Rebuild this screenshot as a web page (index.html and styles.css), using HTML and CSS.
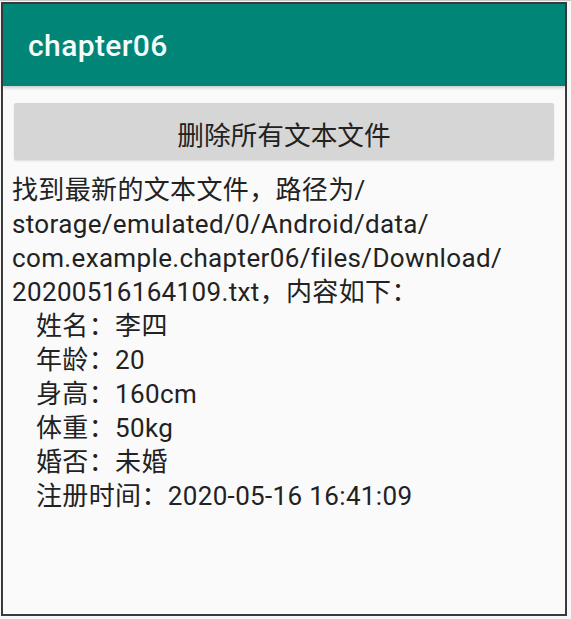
FILE: index.html
```html
<!DOCTYPE html>
<html lang="zh-CN">
<head>
<meta charset="utf-8">
<title>chapter06</title>
<link rel="stylesheet" href="styles.css">
</head>
<body>
<div class="frame">
  <div class="screen">
    <header class="appbar">
      <span class="title">chapter06</span>
    </header>
    <main class="content">
      <div class="btn">删除所有文本文件</div>
      <div class="result">
        <div class="line">找到最新的文本文件，路径为/</div>
        <div class="line">storage/emulated/0/Android/data/</div>
        <div class="line">com.example.chapter06/files/Download/</div>
        <div class="line">20200516164109.txt，内容如下：</div>
        <div class="line item">姓名：李四</div>
        <div class="line item">年龄：20</div>
        <div class="line item">身高：160cm</div>
        <div class="line item">体重：50kg</div>
        <div class="line item">婚否：未婚</div>
        <div class="line item">注册时间：2020-05-16 16:41:09</div>
      </div>
    </main>
  </div>
</div>
</body>
</html>
```

FILE: styles.css
```css
html, body {
  margin: 0;
  padding: 0;
}
body {
  background: #f7f7f7;
  border-top: 1px solid #c8c8c8;
  width: 571px;
  height: 618px;
  overflow: hidden;
  font-family: Roboto, "Noto Sans CJK SC", sans-serif;
}
.frame {
  margin: 1px 0 0 1px;
  width: 562px;
  height: 610px;
  border: 2px solid #3a3a3a;
  background: #fafafa;
}
.screen {
  display: flex;
  flex-direction: column;
  height: 100%;
}
.appbar {
  height: 82px;
  background: #008577;
  display: flex;
  align-items: center;
  padding-left: 25px;
  box-shadow: 0 2px 3px rgba(0, 0, 0, 0.18);
  position: relative;
}
.title {
  color: #f4fbf9;
  font-size: 30px;
  font-weight: 500;
  letter-spacing: 0.4px;
  line-height: 82px;
  padding-top: 1px;
}
.content {
  padding: 17px 11px 0;
}
.btn {
  height: 57px;
  background: #d6d6d6;
  border-radius: 2px;
  box-shadow: 0 1px 2px rgba(0, 0, 0, 0.12);
  display: flex;
  align-items: center;
  justify-content: center;
  color: #222;
  font-size: 26.7px;
  padding-top: 3px;
  box-sizing: border-box;
}
.result {
  margin-top: 13px;
  margin-left: -2px;
  color: #222;
  font-size: 26px;
  letter-spacing: 0.35px;
  line-height: 34px;
}
.line {
  white-space: nowrap;
}
.item {
  padding-left: 24px;
}
```
